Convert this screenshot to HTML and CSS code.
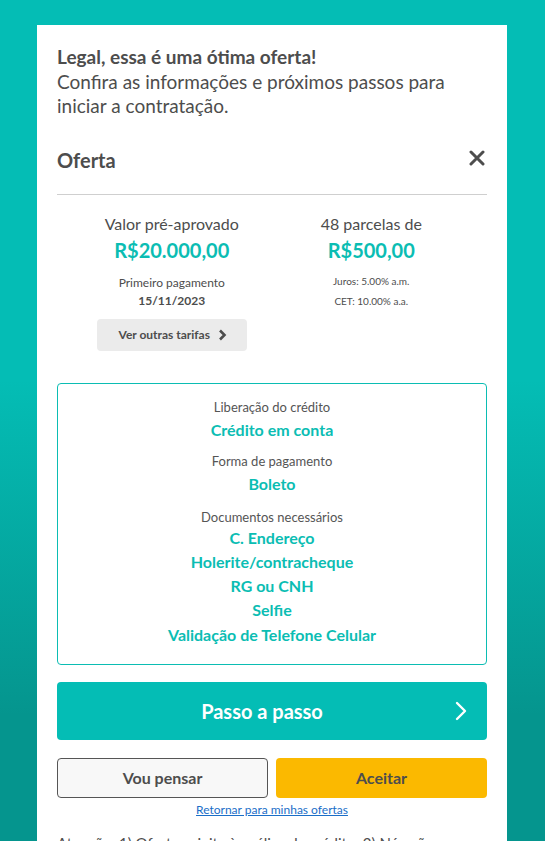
FILE: index.html
```html
<!DOCTYPE html>
<html lang="pt-BR">
<head>
<meta charset="utf-8">
<title>Oferta</title>
<link rel="stylesheet" href="styles.css">
</head>
<body>
<main class="card">
  <h1 class="title"><strong>Legal, essa é uma ótima oferta!</strong><br>Confira as informações e próximos passos para iniciar a contratação.</h1>

  <div class="offer-head">
    <h2 class="offer-title">Oferta</h2>
    <button class="close" aria-label="Fechar">
      <svg width="16" height="16" viewBox="0 0 16 16"><path d="M2 2 L14 14 M14 2 L2 14" stroke="#4d4d4d" stroke-width="3" stroke-linecap="round"/></svg>
    </button>
  </div>
  <hr class="divider">

  <div class="summary">
    <div class="col">
      <div class="col-label">Valor pré-aprovado</div>
      <div class="col-value">R$20.000,00</div>
      <div class="small-label">Primeiro pagamento</div>
      <div class="small-strong">15/11/2023</div>
      <button class="tariffs">Ver outras tarifas
        <svg width="9" height="12" viewBox="0 0 9 12"><path d="M2 1.5 L6.5 6 L2 10.5" fill="none" stroke="#4d4d4d" stroke-width="2.6"/></svg>
      </button>
    </div>
    <div class="col">
      <div class="col-label">48 parcelas de</div>
      <div class="col-value">R$500,00</div>
      <div class="tiny first">Juros: 5.00% a.m.</div>
      <div class="tiny">CET: 10.00% a.a.</div>
    </div>
  </div>

  <section class="details">
    <div class="d-label">Liberação do crédito</div>
    <div class="d-value">Crédito em conta</div>
    <div class="d-label">Forma de pagamento</div>
    <div class="d-value d-value-wide">Boleto</div>
    <div class="d-label">Documentos necessários</div>
    <ul class="docs">
      <li>C. Endereço</li>
      <li>Holerite/contracheque</li>
      <li>RG ou CNH</li>
      <li>Selfie</li>
      <li>Validação de Telefone Celular</li>
    </ul>
  </section>

  <button class="steps">Passo a passo
    <svg class="steps-chev" width="12" height="20" viewBox="0 0 12 20"><path d="M2 2 L10 10 L2 18" fill="none" stroke="#fff" stroke-width="2.4" stroke-linecap="round" stroke-linejoin="round"/></svg>
  </button>

  <div class="actions">
    <button class="btn think">Vou pensar</button>
    <button class="btn accept">Aceitar</button>
  </div>
  <a class="back" href="#">Retornar para minhas ofertas</a>

  <p class="note">Atenção: 1) Oferta sujeita à análise de crédito. 2) Nós não solicitamos depósitos antecipados.</p>
</main>
</body>
</html>
```

FILE: styles.css
```css
* { box-sizing: border-box; }
html, body { margin: 0; }
body {
  font-family: Lato, "Open Sans", sans-serif;
  color: #4d4d4d;
  background: linear-gradient(180deg, #04bdb5 0px, #04bdb5 380px, #05958e 715px, #05958e 100%);
  min-height: 100vh;
  padding-top: 25px;
}
.card {
  width: 470px;
  margin: 0 auto 0 37px;
  background: #fff;
  padding: 20px 20px 40px;
}
.title {
  margin: 0;
  font-size: 19px;
  line-height: 24.5px;
  font-weight: 400;
  color: #4d4d4d;
}
.title strong { font-weight: 700; }
.offer-head {
  display: flex;
  align-items: center;
  justify-content: space-between;
  margin-top: 28px;
}
.offer-title {
  margin: 0;
  font-size: 20px;
  line-height: 26px;
  font-weight: 700;
}
.close {
  border: 0;
  background: none;
  padding: 0;
  margin-right: 1px;
  width: 18px;
  height: 18px;
  display: flex;
  align-items: center;
  justify-content: center;
  margin-top: -4px;
}
.divider {
  border: 0;
  border-top: 1px solid #cfcfcf;
  margin: 21px 0 0;
}
.summary {
  display: grid;
  grid-template-columns: 1fr 1fr;
  padding: 0 16px 0 15px;
  margin-top: 19px;
}
.col {
  display: flex;
  flex-direction: column;
  align-items: center;
  text-align: center;
}
.col-label { font-size: 16px; line-height: 20px; }
.col-value {
  font-size: 20px;
  line-height: 26px;
  font-weight: 700;
  color: #0bbdb3;
  margin-top: 3px;
}
.small-label { font-size: 12px; line-height: 18px; margin-top: 11px; }
.small-strong { font-size: 12px; line-height: 18px; font-weight: 700; }
.tiny { font-size: 10px; line-height: 20px; }
.tiny.first { margin-top: 8px; }
.tariffs {
  margin-top: 9px;
  width: 150px;
  height: 32px;
  border: 0;
  border-radius: 4px;
  background: #ebebeb;
  font-family: inherit;
  font-size: 12px;
  font-weight: 700;
  color: #4d4d4d;
  display: flex;
  align-items: center;
  justify-content: center;
  gap: 8px;
  padding: 0 0 0 2px;
}
.details {
  margin-top: 32px;
  border: 1px solid #0bbdb3;
  border-radius: 4px;
  padding: 14px 10px 17px;
  text-align: center;
}
.d-label { font-size: 13px; line-height: 18px; color: #555; }
.d-value {
  font-size: 16px;
  line-height: 22px;
  font-weight: 700;
  color: #0bbdb3;
  margin-top: 3px;
  margin-bottom: 11px;
}
.d-value-wide { margin-bottom: 13px; }
.docs {
  list-style: none;
  margin: 0;
  padding: 0;
}
.docs li {
  font-size: 16px;
  line-height: 24.25px;
  font-weight: 700;
  color: #0bbdb3;
}
.steps {
  position: relative;
  width: 100%;
  height: 58px;
  margin-top: 17px;
  border: 0;
  border-radius: 4px;
  background: #04bdb5;
  color: #fff;
  font-family: inherit;
  font-size: 20px;
  font-weight: 700;
  display: flex;
  align-items: center;
  justify-content: center;
  padding: 0 20px 0 0;
}
.steps-chev {
  position: absolute;
  right: 20px;
  top: 19px;
}
.actions {
  display: grid;
  grid-template-columns: 1fr 1fr;
  gap: 8px;
  margin-top: 18px;
}
.btn {
  height: 40px;
  border-radius: 4px;
  font-family: inherit;
  font-size: 16px;
  font-weight: 700;
  color: #4d4d4d;
}
.think { background: #f8f8f8; border: 1px solid #555; }
.accept { background: #fbb900; border: 0; }
.back {
  display: block;
  text-align: center;
  font-size: 12px;
  line-height: 16px;
  color: #1a6ec8;
  text-decoration: underline;
  margin-top: 4px;
}
.note {
  margin: 15px 0 0;
  font-size: 15px;
  line-height: 21px;
  color: #4d4d4d;
}
```
